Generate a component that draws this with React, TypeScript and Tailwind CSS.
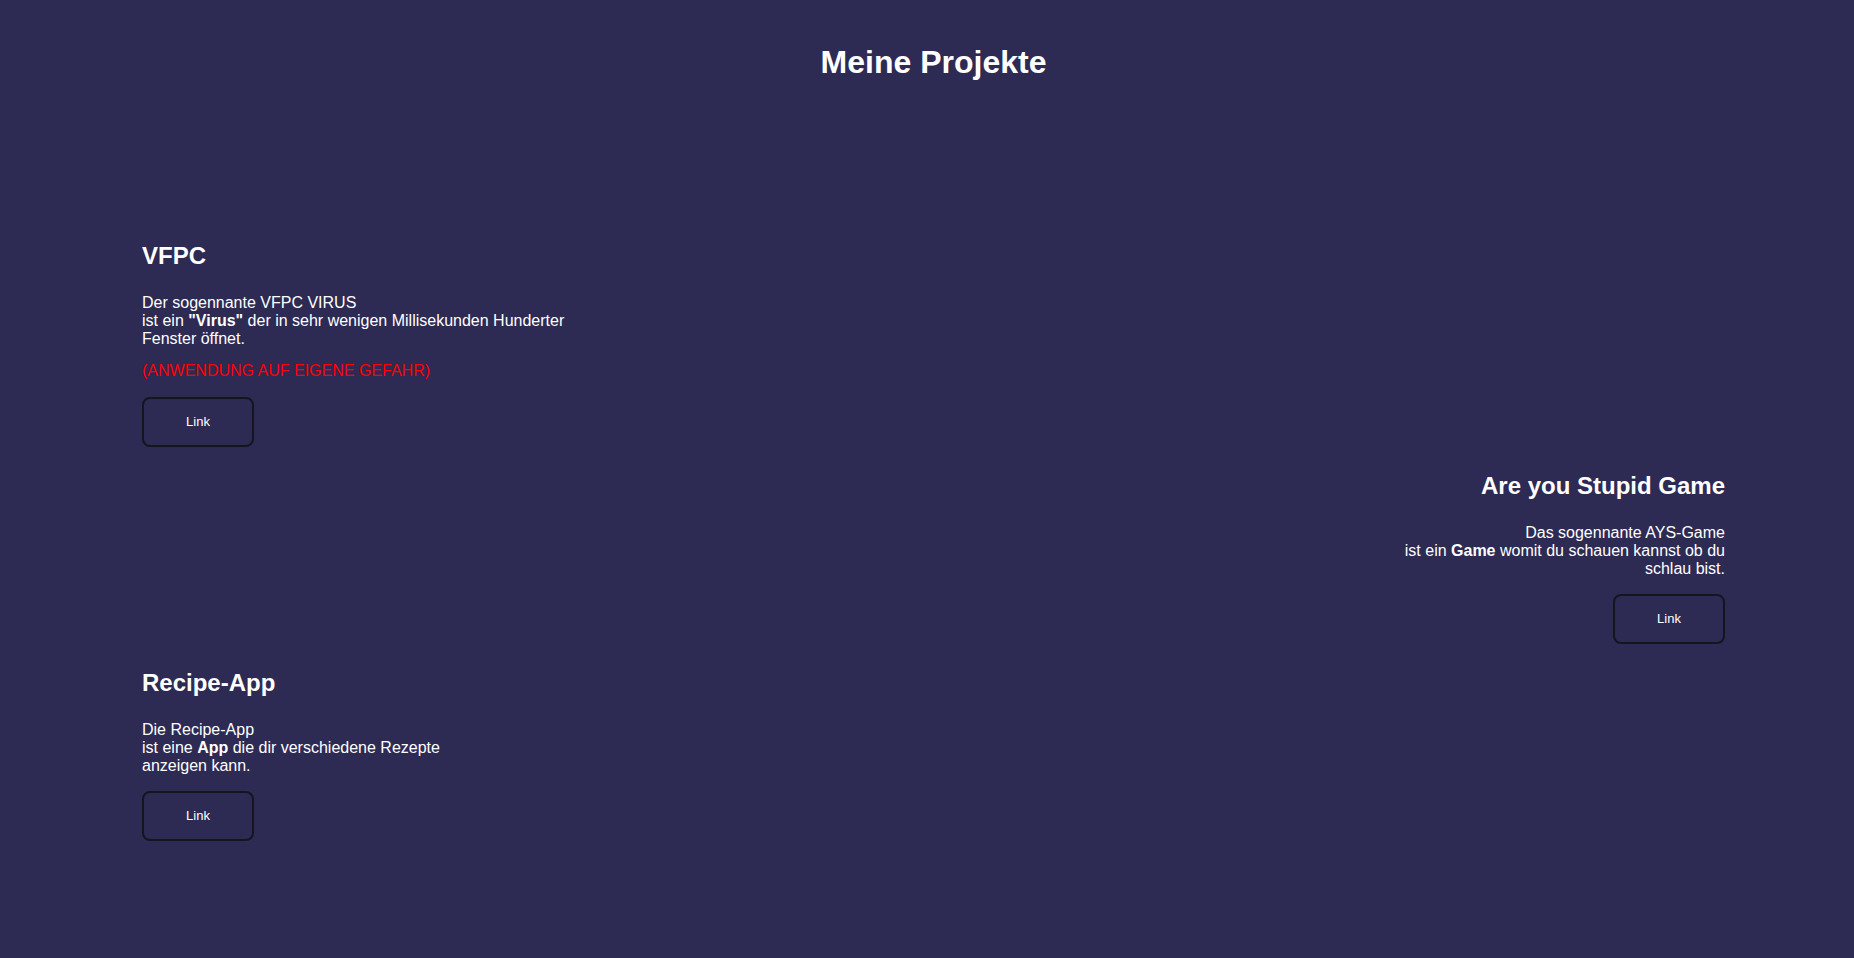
type Project = {
  title: string;
  lines: React.ReactNode;
  warning?: string;
  align: "left" | "right";
  width: string;
};

const projects: Project[] = [
  {
    title: "VFPC",
    lines: (
      <>
        Der sogennante VFPC VIRUS
        <br />
        ist ein <b>"Virus"</b> der in sehr wenigen Millisekunden Hunderter
        Fenster öffnet.
      </>
    ),
    warning: "(ANWENDUNG AUF EIGENE GEFAHR)",
    align: "left",
    width: "w-[440px]",
  },
  {
    title: "Are you Stupid Game",
    lines: (
      <>
        Das sogennante AYS-Game
        <br />
        ist ein <b>Game</b> womit du schauen kannst ob du schlau bist.
      </>
    ),
    align: "right",
    width: "w-[340px]",
  },
  {
    title: "Recipe-App",
    lines: (
      <>
        Die Recipe-App
        <br />
        ist eine <b>App</b> die dir verschiedene Rezepte anzeigen kann.
      </>
    ),
    align: "left",
    width: "w-[340px]",
  },
];

function ProjectCard({ project }: { project: Project }) {
  const right = project.align === "right";
  return (
    <div
      className={`flex flex-col mb-[25px] ${
        right ? "items-end text-right" : "items-start text-left"
      }`}
    >
      <h2 className="text-[24px] font-bold leading-[normal]">{project.title}</h2>
      <p className={`mt-[24px] text-[16px] leading-[normal] ${project.width}`}>
        {project.lines}
      </p>
      {project.warning && (
        <p className="mt-[14px] text-[16px] leading-[normal] text-[#ff0000]">
          {project.warning}
        </p>
      )}
      <button
        className={`${
          project.warning ? "mt-[17px]" : "mt-[16px]"
        } w-[112px] h-[50px] rounded-lg border-2 border-[#16151f] bg-transparent text-white text-[13px] font-medium`}
      >
        Link
      </button>
    </div>
  );
}

export default function App() {
  return (
    <main className="min-h-screen bg-[#2d2a54] text-white font-['Liberation_Sans',Arial,sans-serif] pl-[142px] pr-[129px]">
      <h1 className="pt-[44px] text-center text-[32px] font-bold leading-[normal]">
        Meine Projekte
      </h1>
      <section className="mt-[161px] flex flex-col">
        {projects.map((p) => (
          <ProjectCard key={p.title} project={p} />
        ))}
      </section>
    </main>
  );
}
